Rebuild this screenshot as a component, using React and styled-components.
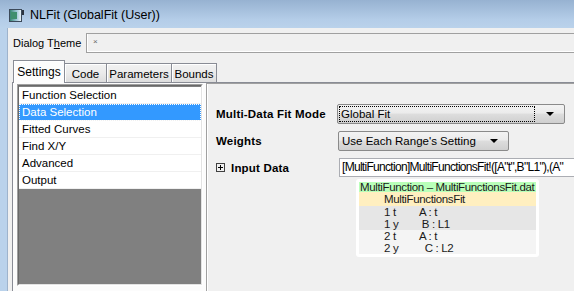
import React from "react";
import styled, { createGlobalStyle } from "styled-components";

const GlobalStyle = createGlobalStyle`
  html, body {
    margin: 0;
    padding: 0;
    background: #f0f0f0;
  }
  body {
    font-family: "Liberation Sans", Arial, sans-serif;
    font-size: 11px;
    color: #000;
  }
`;

const tabs = ["Settings", "Code", "Parameters", "Bounds"];

const pages = [
  "Function Selection",
  "Data Selection",
  "Fitted Curves",
  "Find X/Y",
  "Advanced",
  "Output",
];

const dataRows = [
  { tone: "#e6e6e6", lines: [["1 t", "A : t"], ["1 y", " B : L1"]] },
  { tone: "#f4f4f4", lines: [["2 t", "A : t"], ["2 y", "  C : L2"]] },
];

const Window = styled.div`
  width: 574px;
  height: 291px;
  overflow: hidden;
  display: flex;
  flex-direction: column;
  background: #f0f0f0;
`;

const TitleBar = styled.div`
  height: 28px;
  flex: none;
  display: flex;
  align-items: center;
  gap: 5px;
  padding: 2px 0 0 9px;
  box-sizing: border-box;
  background: linear-gradient(#97b2d1, #b4cde8 70%, #bad2eb);
`;

const Title = styled.span`
  font-size: 12.5px;
  color: #000;
`;

const Frame = styled.div`
  flex: 1;
  display: flex;
  min-height: 0;
`;

const Edge = styled.div`
  width: 7px;
  flex: none;
  background: #bad2eb;
  border-right: 1px solid #9eb3cc;
`;

const Body = styled.div`
  flex: 1;
  display: flex;
  flex-direction: column;
  background: #f0f0f0;
  min-width: 0;
`;

const ThemeRow = styled.div`
  display: flex;
  align-items: center;
  height: 20px;
  margin-top: 5px;
  padding-left: 5px;
`;

const ThemeLabel = styled.span`
  width: 73px;
  flex: none;
`;

const ThemeBox = styled.div`
  flex: 1;
  height: 20px;
  box-sizing: border-box;
  border-top: 1px solid #a0a0a0;
  border-bottom: 1px solid #a0a0a0;
  border-left: 1px solid #a0a0a0;
  box-shadow: inset 0 -1px 0 #fff, inset 1px 0 0 #fff;
  background: #f0f0f0;
  padding-left: 6px;
  font-size: 8px;
  color: #666;
  line-height: 16px;
`;

const Tabs = styled.div`
  margin: 7px 0 0 4px;
  display: flex;
  flex-direction: column;
  flex: 1;
  min-height: 0;
`;

const TabStrip = styled.div`
  display: flex;
  align-items: flex-end;
  height: 23px;
  position: relative;
  z-index: 1;
  margin-bottom: -1px;
`;

const Tab = styled.div`
  box-sizing: border-box;
  height: ${(p) => (p.$active ? 23 : 20)}px;
  width: ${(p) => p.$w}px;
  margin-left: ${(p) => (p.$first ? 1 : -1)}px;
  border: 1px solid #898c95;
  border-bottom: ${(p) => (p.$active ? "none" : "1px solid #898c95")};
  background: ${(p) =>
    p.$active ? "#fcfcfc" : "linear-gradient(#f2f2f2, #ebebeb 50%, #dddddd)"};
  box-shadow: inset 1px 1px 0 #fff;
  display: flex;
  justify-content: center;
  align-items: center;
  padding-top: ${(p) => (p.$active ? 0 : 1)}px;
  font-size: ${(p) => (p.$active ? 12 : 11.5)}px;
  position: relative;
  z-index: ${(p) => (p.$active ? 2 : 1)};
`;

const TabPanel = styled.div`
  flex: 1;
  display: flex;
  border-top: 1px solid #898c95;
  border-left: 1px solid #898c95;
  background: #fcfcfc;
  min-height: 0;
`;

const ListFrame = styled.div`
  width: 186px;
  height: 202px;
  margin: 1px 0 0 4px;
  flex: none;
  box-sizing: border-box;
  border: 1px solid;
  border-color: #a0a0a0 #fff #fff #a0a0a0;
  display: flex;
`;

const ListInner = styled.div`
  flex: 1;
  display: flex;
  flex-direction: column;
  border: 1px solid;
  border-color: #696969 #e3e3e3 #e3e3e3 #696969;
  background: #808080;
`;

const Item = styled.div`
  height: 16px;
  line-height: 16px;
  padding-left: 3px;
  font-size: 11.5px;
  background: ${(p) => (p.$selected ? "#3399ff" : "#fff")};
  color: ${(p) => (p.$selected ? "#fff" : "#000")};
  border-bottom: 1px solid #f0f0f0;
  outline: ${(p) => (p.$selected ? "1px dotted #fff" : "none")};
  outline-offset: -1px;
  &:first-child {
    margin-top: 1px;
  }
`;

const RightPanel = styled.div`
  flex: 1;
  margin-left: 3px;
  position: relative;
  background: #f0f0f0;
  border-left: 1px solid #a0a0a0;
  border-top: 1px solid #a0a0a0;
  box-shadow: inset 1px 0 0 #fff;
  padding: 20px 0 0 9px;
  min-width: 0;
`;

const Form = styled.div`
  display: grid;
  grid-template-columns: 121px minmax(0, 1fr);
  row-gap: 7px;
  align-items: center;
`;

const Label = styled.div`
  font-weight: bold;
  font-size: 11.5px;
  letter-spacing: 0.2px;
  display: flex;
  align-items: center;
  gap: 6px;
`;

const Expander = styled.span`
  width: 9px;
  height: 9px;
  box-sizing: border-box;
  border: 1px solid #404040;
  position: relative;
  &::before,
  &::after {
    content: "";
    position: absolute;
    background: #000;
  }
  &::before {
    left: 1px;
    top: 3px;
    width: 5px;
    height: 1px;
  }
  &::after {
    left: 3px;
    top: 1px;
    width: 1px;
    height: 5px;
  }
`;

const Combo = styled.div`
  box-sizing: border-box;
  width: ${(p) => p.$w}px;
  height: 20px;
  margin-left: ${(p) => p.$shift || 0}px;
  border: 1px solid #8a8a8a;
  border-radius: 2px;
  background: linear-gradient(#f3f3f3, #ebebeb 45%, #dddddd 50%, #cfcfcf);
  display: flex;
  align-items: center;
  padding: 0 10px 0 2px;
  font-size: 11.5px;
  white-space: nowrap;
`;

const ComboText = styled.span`
  flex: 1;
  height: 14px;
  line-height: 14px;
  padding-left: 1px;
  margin-right: 12px;
  overflow: hidden;
  outline: ${(p) => (p.$focus ? "1px dotted #000" : "none")};
`;

const Arrow = styled.span`
  flex: none;
  width: 0;
  height: 0;
  border-left: 4px solid transparent;
  border-right: 4px solid transparent;
  border-top: 4px solid #000;
`;

const TextField = styled.div`
  box-sizing: border-box;
  height: 19px;
  margin-left: 2px;
  border: 1px solid #abadb3;
  border-right: none;
  background: #fff;
  padding-left: 2px;
  line-height: 17px;
  font-size: 12px;
  letter-spacing: -0.7px;
  white-space: nowrap;
  overflow: hidden;
`;

const Popup = styled.div`
  position: absolute;
  left: 149px;
  top: 95px;
  width: 183px;
  box-sizing: border-box;
  padding: 3px;
  background: #fff;
  border-radius: 3px;
  font-size: 11.5px;
  letter-spacing: -0.35px;
  color: #1a1a1a;
`;

const PopHead = styled.div`
  background: #b9ffb9;
  height: 10px;
  line-height: 10px;
  padding-left: 1px;
  white-space: nowrap;
`;

const PopSub = styled.div`
  background: #ffefc0;
  height: 14px;
  line-height: 14px;
  padding-left: 25px;
`;

const PopGroup = styled.div`
  background: ${(p) => p.$tone};
  padding: 0 0 0 25px;
`;

const PopLine = styled.div`
  display: grid;
  grid-template-columns: 35px 1fr;
  height: 12px;
  line-height: 12px;
  white-space: pre;
`;

const AppIcon = () => (
  <svg width="16" height="13" viewBox="0 0 16 13">
    <defs>
      <linearGradient id="ic" x1="0" x2="1" y1="0" y2="0">
        <stop offset="0" stopColor="#2f7f6a" />
        <stop offset="0.6" stopColor="#9fc7d9" />
        <stop offset="1" stopColor="#f2f6fa" />
      </linearGradient>
    </defs>
    <rect x="0.5" y="0.5" width="12" height="12" fill="url(#ic)" stroke="#3c4a5a" />
    <rect x="2" y="3" width="6" height="7" fill="#3f8f6e" />
    <rect x="13" y="1" width="2" height="5" fill="#2c3440" />
  </svg>
);

export default function App() {
  return (
    <Window>
      <GlobalStyle />
      <TitleBar>
        <AppIcon />
        <Title>NLFit (GlobalFit (User))</Title>
      </TitleBar>
      <Frame>
        <Edge />
        <Body>
          <ThemeRow>
            <ThemeLabel>
              Dialog T<u>h</u>eme
            </ThemeLabel>
            <ThemeBox>×</ThemeBox>
          </ThemeRow>
          <Tabs>
            <TabStrip>
              {tabs.map((t, i) => (
                <Tab
                  key={t}
                  $active={i === 0}
                  $first={i === 0}
                  $w={[52, 43, 66, 46][i]}
                >
                  {t}
                </Tab>
              ))}
            </TabStrip>
            <TabPanel>
              <ListFrame>
                <ListInner>
                  {pages.map((p, i) => (
                    <Item key={p} $selected={i === 1}>
                      {p}
                    </Item>
                  ))}
                </ListInner>
              </ListFrame>
              <RightPanel>
                <Form>
                  <Label>Multi-Data Fit Mode</Label>
                  <Combo $w={228}>
                    <ComboText $focus>Global Fit</ComboText>
                    <Arrow />
                  </Combo>
                  <Label>Weights</Label>
                  <Combo $w={171} $shift={1}>
                    <ComboText>Use Each Range's Setting</ComboText>
                    <Arrow />
                  </Combo>
                  <Label>
                    <Expander />
                    Input Data
                  </Label>
                  <TextField>[MultiFunction]MultiFunctionsFit!([A"t",B"L1"),(A"</TextField>
                </Form>
                <Popup>
                  <PopHead>MultiFunction – MultiFunctionsFit.dat</PopHead>
                  <PopSub>MultiFunctionsFit</PopSub>
                  {dataRows.map((g, i) => (
                    <PopGroup key={i} $tone={g.tone}>
                      {g.lines.map(([a, b]) => (
                        <PopLine key={a}>
                          <span>{a}</span>
                          <span>{b}</span>
                        </PopLine>
                      ))}
                    </PopGroup>
                  ))}
                </Popup>
              </RightPanel>
            </TabPanel>
          </Tabs>
        </Body>
      </Frame>
    </Window>
  );
}
